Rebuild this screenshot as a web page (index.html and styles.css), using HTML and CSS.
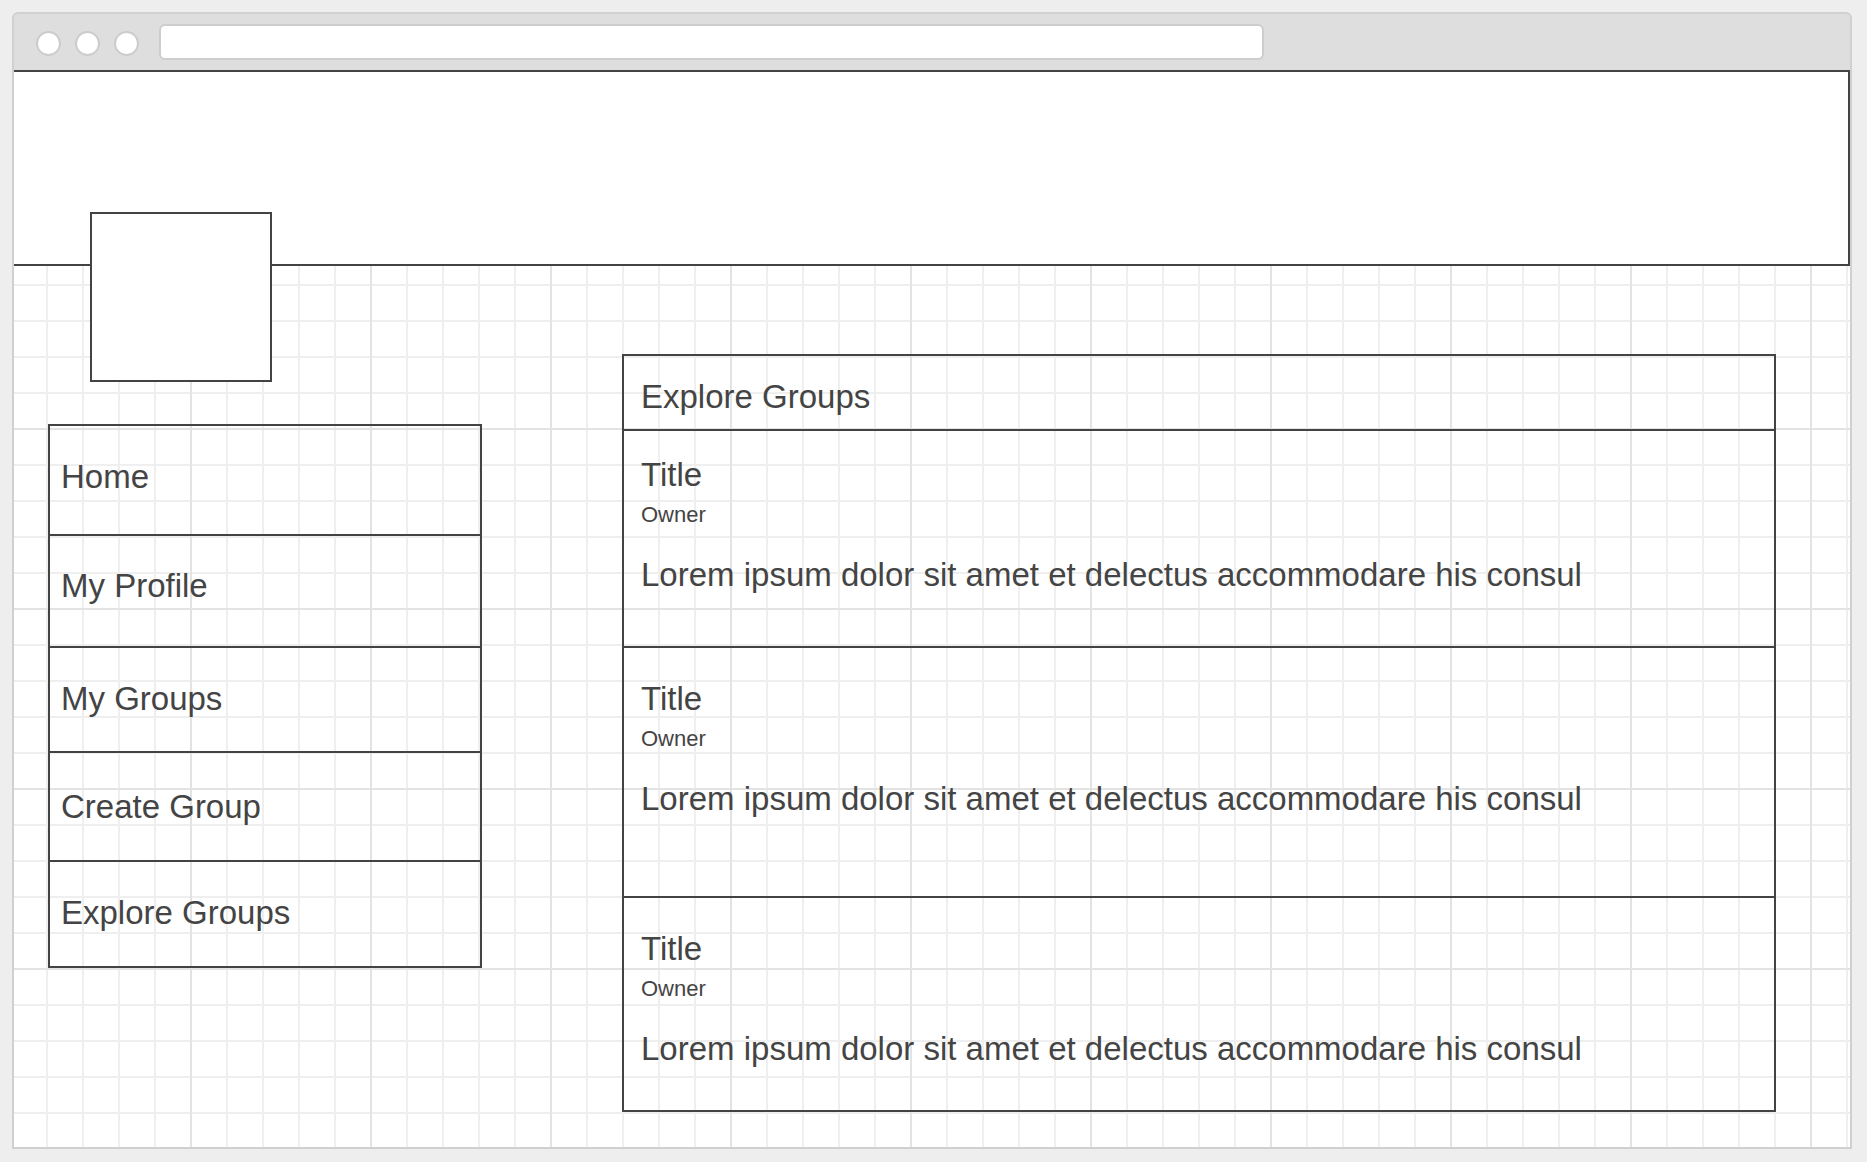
FILE: index.html
```html
<!DOCTYPE html>
<html lang="en">
<head>
<meta charset="utf-8">
<title>Explore Groups</title>
<link rel="stylesheet" href="styles.css">
</head>
<body>
<div class="frame">
  <div class="titlebar">
    <span class="dot"></span>
    <span class="dot"></span>
    <span class="dot"></span>
    <div class="address"></div>
  </div>
  <div class="canvas">
    <header class="banner"></header>
    <div class="layout">
      <aside class="sidebar">
        <div class="avatar"></div>
        <nav class="menu">
          <a class="menu-item">Home</a>
          <a class="menu-item">My Profile</a>
          <a class="menu-item">My Groups</a>
          <a class="menu-item">Create Group</a>
          <a class="menu-item">Explore Groups</a>
        </nav>
      </aside>
      <main class="panel">
        <div class="panel-head">Explore Groups</div>
        <div class="group">
          <div class="group-title">Title</div>
          <div class="group-owner">Owner</div>
          <div class="group-desc">Lorem ipsum dolor sit amet et delectus accommodare his consul</div>
        </div>
        <div class="group">
          <div class="group-title">Title</div>
          <div class="group-owner">Owner</div>
          <div class="group-desc">Lorem ipsum dolor sit amet et delectus accommodare his consul</div>
        </div>
        <div class="group">
          <div class="group-title">Title</div>
          <div class="group-owner">Owner</div>
          <div class="group-desc">Lorem ipsum dolor sit amet et delectus accommodare his consul</div>
        </div>
      </main>
    </div>
  </div>
</div>
</body>
</html>
```

FILE: styles.css
```css
* {
  box-sizing: border-box;
}

html, body {
  margin: 0;
  padding: 0;
  background: #eeeeee;
  font-family: "Liberation Sans", Arial, sans-serif;
  color: #444444;
}

.frame {
  margin: 12px 0 0 12px;
  width: 1840px;
  height: 1137px;
  border: 2px solid #d0d0d0;
  border-radius: 6px 6px 0 0;
  background: #dedede;
  display: flex;
  flex-direction: column;
  overflow: hidden;
}

.titlebar {
  height: 56px;
  flex: none;
  display: flex;
  align-items: center;
  padding: 2px 0 0 22px;
}

.dot {
  width: 25px;
  height: 25px;
  border-radius: 50%;
  background: #ffffff;
  border: 2px solid #cccccc;
  margin-right: 14px;
  flex: none;
}

.address {
  margin-left: 6px;
  width: 1105px;
  height: 36px;
  margin-top: -3px;
  background: #ffffff;
  border: 2px solid #cdcdcd;
  border-radius: 6px;
}

.canvas {
  flex: 1;
  background-color: #ffffff;
  background-image:
    linear-gradient(to right, #e3e3e3 2px, transparent 2px),
    linear-gradient(to bottom, #e3e3e3 2px, transparent 2px),
    linear-gradient(to right, #efefef 2px, transparent 2px),
    linear-gradient(to bottom, #efefef 2px, transparent 2px);
  background-size: 180px 180px, 180px 180px, 36px 36px, 36px 36px;
  background-position: 176px 0, 0 178px, 32px 0, 0 34px;
}

.banner {
  display: block;
  margin-left: -2px;
  width: calc(100% + 2px);
  height: 196px;
  background: #ffffff;
  border: 2px solid #434343;
}

.layout {
  display: flex;
  align-items: flex-start;
}

.sidebar {
  margin-left: 34px;
  width: 434px;
  flex: none;
}

.avatar {
  margin: -54px 0 0 42px;
  width: 182px;
  height: 170px;
  background: #ffffff;
  border: 2px solid #434343;
}

.menu {
  margin-top: 42px;
  border: 2px solid #434343;
  display: flex;
  flex-direction: column;
}

.menu-item {
  display: block;
  padding: 32px 0 0 11px;
  font-size: 33px;
  line-height: 38px;
  color: #444444;
  text-decoration: none;
  border-bottom: 2px solid #434343;
  white-space: nowrap;
}

.menu-item:nth-child(1) { height: 110px; }
.menu-item:nth-child(2) { height: 112px; padding-top: 31px; }
.menu-item:nth-child(3) { height: 105px; }
.menu-item:nth-child(4) { height: 109px; padding-top: 35px; }
.menu-item:nth-child(5) { height: 104px; border-bottom: none; }

.panel {
  margin: 88px 0 0 140px;
  width: 1154px;
  flex: none;
  border: 2px solid #434343;
}

.panel-head {
  height: 75px;
  padding: 22px 17px 0;
  font-size: 33px;
  line-height: 38px;
  border-bottom: 2px solid #434343;
}

.group {
  padding: 32px 17px 0;
  border-bottom: 2px solid #434343;
}

.group:nth-child(2) { height: 217px; padding-top: 25px; }
.group:nth-child(3) { height: 250px; }
.group:nth-child(4) { height: 212px; border-bottom: none; }

.group-title {
  font-size: 33px;
  line-height: 38px;
}

.group-owner {
  margin-top: 8px;
  font-size: 22px;
  line-height: 26px;
}

.group-desc {
  margin-top: 28px;
  font-size: 33px;
  line-height: 38px;
  white-space: nowrap;
}
```
